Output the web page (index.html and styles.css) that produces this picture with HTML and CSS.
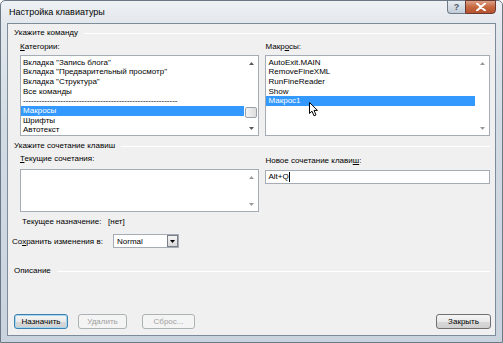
FILE: index.html
```html
<!DOCTYPE html>
<html lang="ru">
<head>
<meta charset="utf-8">
<title>Настройка клавиатуры</title>
<link rel="stylesheet" href="styles.css">
</head>
<body>
<div class="window">
  <div class="titlebar">
    <span class="title">Настройка клавиатуры</span>
    <div class="caption">
      <span class="cap-help">?</span>
      <span class="cap-close"><svg width="10" height="8" viewBox="0 0 10 8"><path d="M1 0.5 L9 7.5 M9 0.5 L1 7.5" stroke="#fff" stroke-width="2" stroke-linecap="round"/></svg></span>
    </div>
  </div>
  <div class="client">
    <div class="group-head"><span>Укажите команду</span><i class="rule"></i></div>
    <div class="two-col cmd">
      <div class="col col-left">
        <div class="label"><u>К</u>атегории:</div>
        <div class="listbox list-tall">
          <div class="items">
            <div class="item">Вкладка "Запись блога"</div>
            <div class="item">Вкладка "Предварительный просмотр"</div>
            <div class="item">Вкладка "Структура"</div>
            <div class="item">Все команды</div>
            <div class="item sep">----------------------------------------------------------</div>
            <div class="item selected">Макросы</div>
            <div class="item">Шрифты</div>
            <div class="item">Автотекст</div>
          </div>
          <div class="vscroll">
            <span class="arrow up"><svg width="5" height="3" viewBox="0 0 5 3"><path d="M0 3 L2.5 0 L5 3Z" fill="#5a5a5a"/></svg></span>
            <span class="track"><span class="thumb"></span></span>
            <span class="arrow down"><svg width="5" height="3" viewBox="0 0 5 3"><path d="M0 0 L2.5 3 L5 0Z" fill="#5a5a5a"/></svg></span>
          </div>
        </div>
      </div>
      <div class="col col-right">
        <div class="label">Макр<u>о</u>сы:</div>
        <div class="listbox list-tall has-cursor">
          <div class="items">
            <div class="item">AutoExit.MAIN</div>
            <div class="item">RemoveFineXML</div>
            <div class="item">RunFineReader</div>
            <div class="item">Show</div>
            <div class="item selected">Макрос1</div>
          </div>
          <div class="vscroll">
            <span class="arrow up"><svg width="5" height="3" viewBox="0 0 5 3"><path d="M0 3 L2.5 0 L5 3Z" fill="#9a9a9a"/></svg></span>
            <span class="track"></span>
            <span class="arrow down"><svg width="5" height="3" viewBox="0 0 5 3"><path d="M0 0 L2.5 3 L5 0Z" fill="#9a9a9a"/></svg></span>
          </div>
          <svg class="cursor" width="10" height="15" viewBox="0 0 10 15"><path d="M0.5 0.5 L0.5 11.5 L3 9.2 L5 13.8 L7 12.9 L5 8.4 L8.5 8.4 Z" fill="#fff" stroke="#000" stroke-width="1" stroke-linejoin="round"/></svg>
        </div>
      </div>
    </div>

    <div class="group-head gh2"><span>Укажите сочетание клавиш</span><i class="rule"></i></div>
    <div class="two-col keys">
      <div class="col col-left">
        <div class="label"><u>Т</u>екущие сочетания:</div>
        <div class="listbox list-short">
          <div class="items"></div>
          <div class="vscroll">
            <span class="arrow up"><svg width="5" height="3" viewBox="0 0 5 3"><path d="M0 3 L2.5 0 L5 3Z" fill="#9a9a9a"/></svg></span>
            <span class="track"></span>
            <span class="arrow down"><svg width="5" height="3" viewBox="0 0 5 3"><path d="M0 0 L2.5 3 L5 0Z" fill="#9a9a9a"/></svg></span>
          </div>
        </div>
        <div class="assign"><span class="assign-label">Текущее назначение:</span><span>[нет]</span></div>
      </div>
      <div class="col col-right">
        <div class="label label-new">Новое сочетание клави<u>ш</u>:</div>
        <div class="textbox">Alt+Q<span class="caret"></span></div>
      </div>
    </div>

    <div class="save-row">
      <span class="save-label">Со<u>х</u>ранить изменения в:</span>
      <div class="combo"><span class="combo-text">Normal</span><span class="combo-btn"><svg width="5" height="3" viewBox="0 0 5 3"><path d="M0 0 L2.5 3 L5 0Z" fill="#000"/></svg></span></div>
    </div>

    <div class="group-head gh3"><span>Описание</span><i class="rule"></i></div>

    <div class="buttons">
      <span class="btn btn-default">Назначить</span>
      <span class="btn btn-disabled btn-del">Удалить</span>
      <span class="btn btn-disabled btn-reset">Сброс...</span>
      <span class="btn btn-close">Закрыть</span>
    </div>
  </div>
</div>
</body>
</html>
```

FILE: styles.css
```css
* { box-sizing: border-box; }
html, body { margin: 0; padding: 0; }
body {
  width: 503px;
  height: 343px;
  overflow: hidden;
  font-family: "Liberation Sans", Arial, sans-serif;
  font-size: 8px;
  color: #000;
  background: #fff;
}
u { text-decoration: underline; text-underline-offset: 1px; }

.window {
  width: 503px;
  height: 343px;
  display: flex;
  flex-direction: column;
  border: 1px solid #6c7885;
  border-radius: 5px 5px 0 0;
  background: linear-gradient(to bottom, #eef1f4 0, #e3e8ed 22px, #d3dce5 120px, #c9d3de 100%);
}

.titlebar {
  height: 22px;
  display: flex;
  align-items: center;
  padding-left: 8px;
}
.title { font-size: 9px; color: #000; }

.caption {
  margin-left: auto;
  margin-right: 6px;
  align-self: flex-start;
  margin-top: -1px;
  display: flex;
}
.cap-help {
  width: 18px;
  height: 14px;
  border: 1px solid #6e7a88;
  border-right: none;
  border-radius: 0 0 0 4px;
  background: linear-gradient(to bottom, #e6ebf0, #c2ccd7);
  color: #4f5a66;
  font-size: 9px;
  font-weight: bold;
  display: flex;
  align-items: center;
  justify-content: center;
}
.cap-close {
  width: 31px;
  height: 14px;
  border: 1px solid #6a3b30;
  border-radius: 0 0 4px 0;
  background: linear-gradient(to bottom, #dba088 0, #c7683f 50%, #b4532e 100%);
  display: flex;
  align-items: center;
  justify-content: center;
}

.client {
  margin: 0 6px;
  height: 313px;
  border: 1px solid #7d8b9b;
  background: #f0f0f0;
  display: flex;
  flex-direction: column;
  padding: 0 5px 6px 6px;
}

.group-head {
  height: 12px;
  line-height: 12px;
  display: flex;
  align-items: center;
  margin-top: 3px;
}
.group-head .rule {
  flex: 1;
  height: 1px;
  margin-left: 6px;
  background: #d5dde4;
  border-bottom: 1px solid #fff;
}
.gh2 { margin-top: 4px; }
.gh3 { margin-top: 17px; }

.two-col {
  display: flex;
  gap: 6px;
  margin-left: 6px;
}
.col-left { width: 240px; }
.col-right { width: 225px; }

.label {
  height: 12px;
  line-height: 12px;
}
.cmd .label { margin-top: 2px; }
.keys .label { margin-top: 1px; }
.keys .label-new { margin-top: 3px; }

.listbox {
  position: relative;
  display: flex;
  background: #fff;
  border: 1px solid #a5acb5;
}
.list-tall { height: 81px; margin-top: 2px; }
.list-short { height: 43px; margin-top: 4px; }

.items {
  flex: 1;
  padding-top: 1.5px;
  overflow: hidden;
}
.item {
  height: 9.7px;
  line-height: 9.7px;
  padding-left: 2px;
  white-space: nowrap;
}
.item.sep { letter-spacing: 0; color: #000; }
.item.selected { background: #3399ff; color: #fff; }

.vscroll {
  width: 14px;
  display: flex;
  flex-direction: column;
  background: #fff;
}
.arrow {
  height: 14px;
  display: flex;
  align-items: center;
  justify-content: center;
}
.track { flex: 1; }
.thumb {
  display: block;
  width: 12px;
  height: 11px;
  margin-top: 37px;
  margin-left: 1px;
  border: 1px solid #9aa1a8;
  border-radius: 2px;
  background: linear-gradient(to right, #f4f4f4, #dedede);
}

.cursor {
  position: absolute;
  left: 43px;
  top: 46px;
}

.assign {
  height: 12px;
  line-height: 12px;
  margin-top: 4px;
  padding-left: 2px;
  display: flex;
}
.assign-label { width: 86px; }

.textbox {
  height: 14px;
  margin-top: 3px;
  background: #fff;
  border: 1px solid #a5acb5;
  line-height: 12px;
  padding-left: 2px;
  display: flex;
  align-items: center;
}
.caret {
  width: 1px;
  height: 10px;
  background: #000;
  margin-left: 0.5px;
}

.save-row {
  display: flex;
  align-items: center;
  height: 14px;
  margin-top: 6px;
  margin-left: -2px;
}
.save-label { width: 101px; }
.combo {
  width: 66px;
  height: 14px;
  background: #fff;
  border: 1px solid #a5acb5;
  display: flex;
  align-items: center;
}
.combo-text { flex: 1; padding-left: 3px; }
.combo-btn {
  width: 11px;
  height: 12px;
  margin-right: 0;
  border: 1px solid #7a7f85;
  background: linear-gradient(to bottom, #f6f6f6, #d8d8d8);
  display: flex;
  align-items: center;
  justify-content: center;
}

.buttons {
  margin-top: auto;
  display: flex;
  height: 15px;
}
.btn {
  height: 15px;
  display: flex;
  align-items: center;
  justify-content: center;
  border: 1px solid #707070;
  border-radius: 3px;
  background: linear-gradient(to bottom, #f6f6f6 0, #e9e9e9 50%, #d9d9d9 51%, #cfcfcf 100%);
}
.btn-default {
  width: 54px;
  border-color: #3c7fb1;
  box-shadow: inset 0 0 0 1px #a8d8f0;
}
.btn-disabled {
  border-color: #adb2b5;
  background: #f4f4f4;
  color: #a0a0a0;
}
.btn-del { width: 49px; margin-left: 10px; }
.btn-reset { width: 53px; margin-left: 15px; }
.btn-close { width: 55px; margin-left: auto; margin-right: -1px; }
```
